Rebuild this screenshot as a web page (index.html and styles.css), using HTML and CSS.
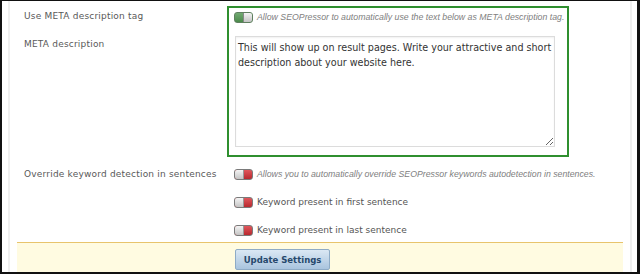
FILE: index.html
```html
<!DOCTYPE html>
<html lang="en">
<head>
    <meta charset="UTF-8">
    <meta name="viewport" content="width=device-width, initial-scale=1.0">
    <title>SEOPressor Settings</title>
    <link rel="stylesheet" href="styles.css">
</head>
<body>
    <div class="frame">
        <div class="panel">
            <!-- META description settings -->
            <div class="setting-row meta-row">
                <div class="labels">
                    <label class="label first">Use META description tag</label>
                    <label class="label second">META description</label>
                </div>
                <div class="meta-box">
                    <div class="toggle-row">
                        <span class="toggle on"><span class="knob"></span></span>
                        <span class="hint">Allow SEOPressor to automatically use the text below as META description tag.</span>
                    </div>
                    <textarea class="meta-text">This will show up on result pages. Write your attractive and short description about your website here.</textarea>
                </div>
            </div>

            <!-- Keyword detection settings -->
            <div class="setting-row override-row">
                <div class="labels">
                    <label class="label">Override keyword detection in sentences</label>
                </div>
                <div class="options">
                    <div class="toggle-row">
                        <span class="toggle off"><span class="knob"></span></span>
                        <span class="hint">Allows you to automatically override SEOPressor keywords autodetection in sentences.</span>
                    </div>
                    <div class="toggle-row">
                        <span class="toggle off"><span class="knob"></span></span>
                        <span class="option-text">Keyword present in first sentence</span>
                    </div>
                    <div class="toggle-row">
                        <span class="toggle off"><span class="knob"></span></span>
                        <span class="option-text">Keyword present in last sentence</span>
                    </div>
                </div>
            </div>

            <div class="submit-bar">
                <button class="update-btn">Update Settings</button>
            </div>
        </div>
    </div>
</body>
</html>
```

FILE: styles.css
```css
/* Reset and base styles */
* {
    box-sizing: border-box;
    margin: 0;
    padding: 0;
}

body {
    font-family: 'DejaVu Sans', Verdana, sans-serif;
    color: #555;
    background-color: #111;
}

/* Outer frame (white page inside dark border) */
.frame {
    margin: 1px 3px 0 2px;
    height: 271px;
    background-color: #fff;
    padding: 0 5px 0 6px;
}

.panel {
    height: 100%;
    border-left: 2px solid #efefef;
    border-right: 2px solid #efefef;
    padding: 0 7px;
    display: flex;
    flex-direction: column;
}

/* Setting rows */
.setting-row {
    display: grid;
    grid-template-columns: 210px 1fr;
}

.meta-row {
    margin-top: 5px;
}

.override-row {
    margin-top: 10px;
}

.labels {
    padding-left: 7px;
}

.label {
    display: block;
    font-size: 9px;
    line-height: 14px;
    letter-spacing: 0.2px;
    color: #595959;
}

.meta-row .label.first {
    margin-top: 3px;
}

.meta-row .label.second {
    margin-top: 14px;
}

/* Highlighted META box */
.meta-box {
    width: 342px;
    height: 151px;
    border: 2px solid #2f8f2f;
    padding: 2px 0 0 5px;
}

.options {
    padding-left: 7px;
}

.toggle-row {
    display: flex;
    align-items: center;
    gap: 4px;
    height: 14px;
}

.options .toggle-row + .toggle-row {
    margin-top: 14px;
}

.hint {
    font-family: 'Liberation Sans', Arial, sans-serif;
    font-style: italic;
    font-size: 8.75px;
    color: #808080;
    white-space: nowrap;
}

.option-text {
    font-size: 9px;
    color: #555;
    white-space: nowrap;
}

.meta-text {
    display: block;
    margin: 12px 0 0 1px;
    width: 320px;
    height: 111px;
    border: 1px solid #dcdcdc;
    box-shadow: inset 0 1px 2px rgba(0,0,0,0.06);
    padding: 3px 2px;
    font-family: 'DejaVu Sans', Verdana, sans-serif;
    font-size: 9.6px;
    line-height: 15px;
    color: #333;
    resize: both;
    outline: none;
}

/* Toggle switches */
.toggle {
    display: inline-flex;
    width: 19px;
    height: 11px;
    border: 1px solid #7a7a7a;
    border-radius: 3px;
    overflow: hidden;
    flex-shrink: 0;
}

.toggle .knob {
    width: 9px;
    height: 100%;
    background: linear-gradient(#f4f4f4, #c4c4c4);
    border-right: 1px solid #999;
}

.toggle.on {
    flex-direction: row-reverse;
    background: linear-gradient(#72aa72, #4b8a4b); /* Green */
    border-color: #5f7f5f;
}

.toggle.on .knob {
    border-right: none;
    border-left: 1px solid #888;
}

.toggle.off {
    background: linear-gradient(#e0575c, #b8282e); /* Red */
}

/* Submit bar */
.submit-bar {
    margin-top: 5px;
    flex: 1;
    background-color: #fffbe1;
    border-top: 1px solid #e8c46c;
    padding: 6px 0 0 218px;
}

.update-btn {
    display: block;
    width: 95px;
    height: 21px;
    border: 1px solid #8eabc6;
    border-radius: 2px;
    background: linear-gradient(#dbe8f4, #a9c4de);
    color: #26486c;
    font-family: 'DejaVu Sans', Verdana, sans-serif;
    font-weight: bold;
    font-size: 8.5px;
    cursor: pointer;
}
```
